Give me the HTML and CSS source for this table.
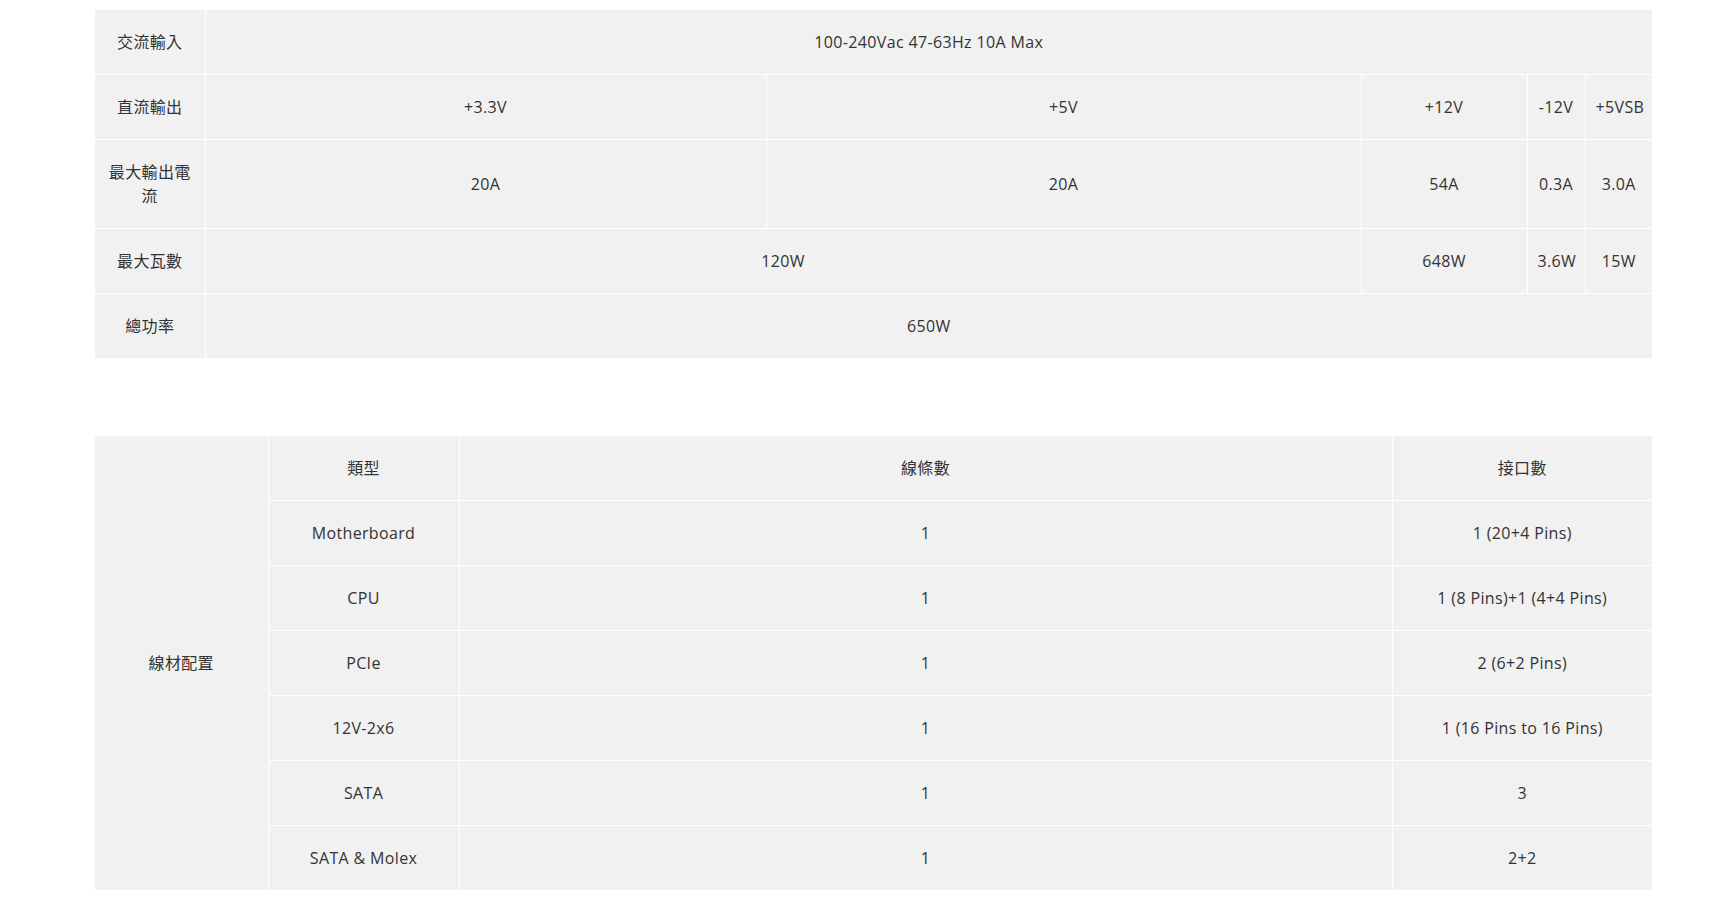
FILE: index.html
```html
<!DOCTYPE html>
<html lang="zh-Hant">
<head>
<meta charset="utf-8">
<title>規格</title>
<link rel="stylesheet" href="styles.css">
</head>
<body>
<div class="page">
  <table class="spec spec-power">
    <colgroup>
      <col class="p-c1"><col class="p-c2"><col class="p-c3"><col class="p-c4"><col class="p-c5"><col class="p-c6">
    </colgroup>
    <tbody>
      <tr><td>交流輸入</td><td colspan="5">100-240Vac 47-63Hz 10A Max</td></tr>
      <tr><td>直流輸出</td><td>+3.3V</td><td>+5V</td><td>+12V</td><td>-12V</td><td>+5VSB</td></tr>
      <tr><td>最大輸出電流</td><td>20A</td><td>20A</td><td>54A</td><td>0.3A</td><td>3.0A</td></tr>
      <tr><td>最大瓦數</td><td colspan="2">120W</td><td>648W</td><td>3.6W</td><td>15W</td></tr>
      <tr><td>總功率</td><td colspan="5">650W</td></tr>
    </tbody>
  </table>

  <table class="spec spec-cable">
    <colgroup>
      <col class="c-c1"><col class="c-c2"><col class="c-c3"><col class="c-c4">
    </colgroup>
    <tbody>
      <tr><td rowspan="7">線材配置</td><td>類型</td><td>線條數</td><td>接口數</td></tr>
      <tr><td>Motherboard</td><td>1</td><td>1 (20+4 Pins)</td></tr>
      <tr><td>CPU</td><td>1</td><td>1 (8 Pins)+1 (4+4 Pins)</td></tr>
      <tr><td>PCIe</td><td>1</td><td>2 (6+2 Pins)</td></tr>
      <tr><td>12V-2x6</td><td>1</td><td>1 (16 Pins to 16 Pins)</td></tr>
      <tr><td>SATA</td><td>1</td><td>3</td></tr>
      <tr><td>SATA &amp; Molex</td><td>1</td><td>2+2</td></tr>
    </tbody>
  </table>
</div>
</body>
</html>
```

FILE: styles.css
```css
html, body {
  margin: 0;
  padding: 0;
  background: #ffffff;
}

body {
  font-family: "Open Sans", "Noto Sans CJK TC", sans-serif;
  font-size: 16px;
  color: #333333;
}

.page {
  padding: 10px 81px 8px 95px;
}

.spec {
  width: 100%;
  table-layout: fixed;
  border-collapse: collapse;
  border-style: hidden;
  background: #f1f1f1;
}

.spec td {
  border: 1px solid #ffffff;
  padding: 20px 10px;
  line-height: 24px;
  letter-spacing: 0.35px;
  text-align: center;
  vertical-align: middle;
}

.spec-cable {
  margin-top: 78px;
}

.p-c1 { width: 110px; }
.p-c2 { width: 561px; }
.p-c3 { width: 595px; }
.p-c4 { width: 166px; }
.p-c5 { width: 58px; }
.p-c6 { width: 67px; }

.c-c1 { width: 173px; }
.c-c2 { width: 191px; }
.c-c3 { width: 933px; }
.c-c4 { width: 260px; }
```
